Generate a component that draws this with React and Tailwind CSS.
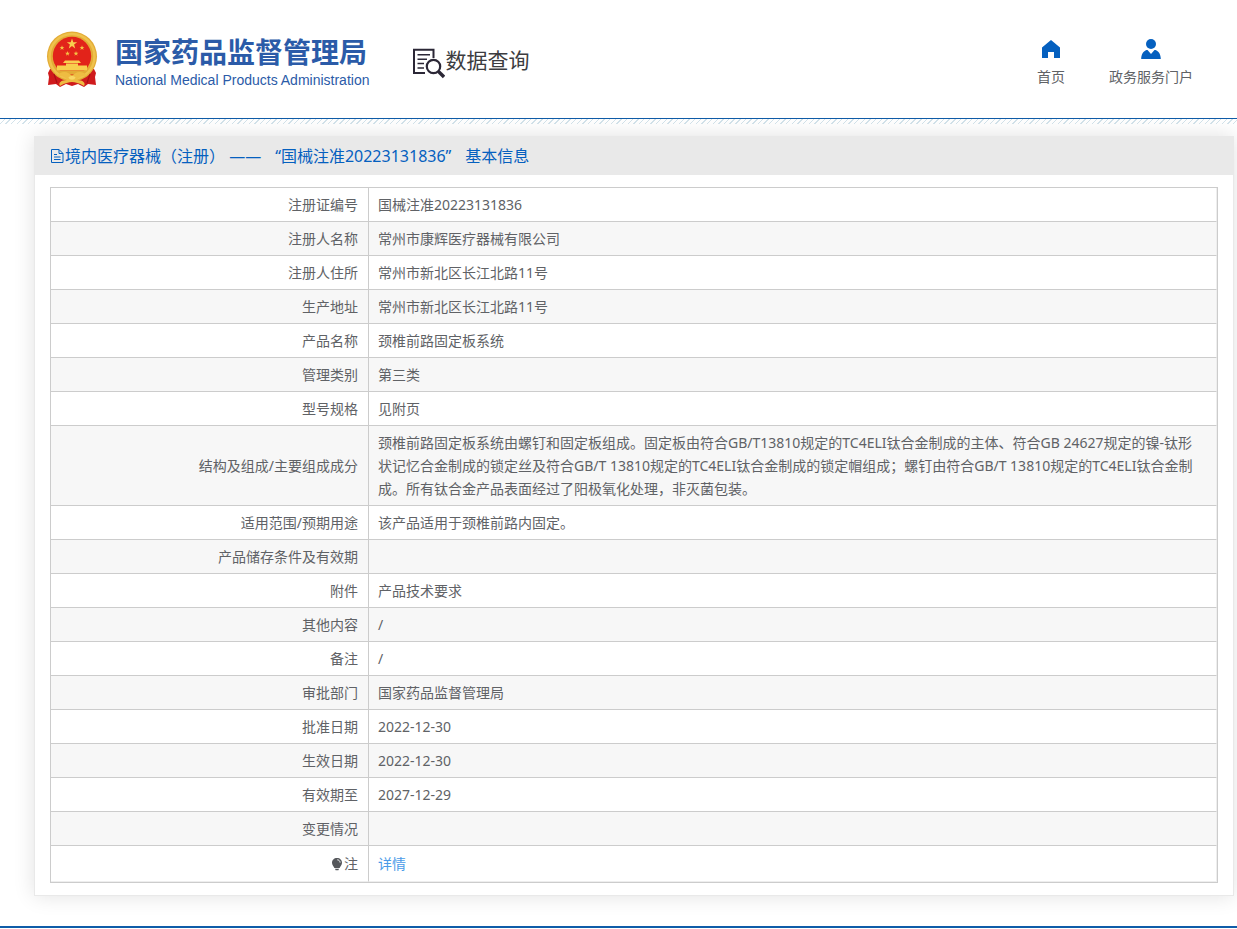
const rows = [
    { label: "注册证编号", value: "国械注准20223131836" },
    { label: "注册人名称", value: "常州市康辉医疗器械有限公司" },
    { label: "注册人住所", value: "常州市新北区长江北路11号" },
    { label: "生产地址", value: "常州市新北区长江北路11号" },
    { label: "产品名称", value: "颈椎前路固定板系统" },
    { label: "管理类别", value: "第三类" },
    { label: "型号规格", value: "见附页" },
    {
        label: "结构及组成/主要组成成分",
        value: "颈椎前路固定板系统由螺钉和固定板组成。固定板由符合GB/T13810规定的TC4ELI钛合金制成的主体、符合GB 24627规定的镍-钛形状记忆合金制成的锁定丝及符合GB/T 13810规定的TC4ELI钛合金制成的锁定帽组成；螺钉由符合GB/T 13810规定的TC4ELI钛合金制成。所有钛合金产品表面经过了阳极氧化处理，非灭菌包装。",
    },
    { label: "适用范围/预期用途", value: "该产品适用于颈椎前路内固定。" },
    { label: "产品储存条件及有效期", value: "" },
    { label: "附件", value: "产品技术要求" },
    { label: "其他内容", value: "/" },
    { label: "备注", value: "/" },
    { label: "审批部门", value: "国家药品监督管理局" },
    { label: "批准日期", value: "2022-12-30" },
    { label: "生效日期", value: "2022-12-30" },
    { label: "有效期至", value: "2027-12-29" },
    { label: "变更情况", value: "" },
];

function Emblem() {
    return (
        <svg viewBox="0 0 52 57" className="h-[57px] w-[52px]" aria-hidden="true">
            <path d="M4 38 L2 42 L3 46 L2 54 L10 53 L14 56 L20 53 L26 55 L32 53 L38 56 L42 53 L50 54 L49 46 L50 42 L48 38 Z" fill="#cf1a1c" />
            <circle cx="26" cy="25.5" r="25" fill="#e3ab35" />
            <circle cx="26" cy="25.5" r="22.5" fill="none" stroke="#efc24c" strokeWidth="2.5" />
            <circle cx="26" cy="25" r="19.2" fill="#e2231a" />
            <path d="M26 7.5 L27.3 11.2 L31.2 11.3 L28.1 13.6 L29.2 17.4 L26 15.1 L22.8 17.4 L23.9 13.6 L20.8 11.3 L24.7 11.2 Z" fill="#f8cf4e" />
            <g fill="#f5c344">
                <path id="star" d="M16 14.2 L16.6 16 L18.4 16 L17 17.1 L17.5 18.9 L16 17.8 L14.5 18.9 L15 17.1 L13.6 16 L15.4 16 Z" />
                <use href="#star" x="20" />
                <use href="#star" x="5.5" y="5.8" />
                <use href="#star" x="14" y="5.8" />
            </g>
            <path d="M17 32 L19 29.5 H33 L35 32 Z M20 32.4 H32 V34.5 H20 Z M11 34.6 H41 V39.4 H11 Z" fill="#f8cf4e" />
            <path d="M10 39.4 H42 L37 43.5 H15 Z" fill="#e3ab35" />
            <path d="M11 45 C17 38 23 42 26 45 C29 42 35 38 41 45 C36 44 32 46 31 49 C37 49 40 52 38 55 C33 52 29 51 26 51 C23 51 19 52 14 55 C12 52 15 49 21 49 C20 46 16 44 11 45 Z" fill="#eebc42" />
            <path d="M22.5 46.5 C24 44.5 28 44.5 29.5 46.5 C28.5 49.5 23.5 49.5 22.5 46.5 Z" fill="#f8d766" />
            <path d="M8 43 L11 52 M44 43 L41 52" stroke="#a81014" strokeWidth="1.2" />
        </svg>
    );
}

function SearchDocIcon() {
    return (
        <svg viewBox="0 0 32 32" className="h-8 w-8" fill="none" stroke="#2b2736" aria-hidden="true">
            <path d="M12 26 H1 V2.8 H20.5 V11" strokeWidth="2" />
            <path d="M4.5 7.8 H17 M4.5 12.2 H14 M4.5 16.6 H11 M4.5 21 H11" strokeWidth="1.5" />
            <circle cx="20.5" cy="19.5" r="6.7" strokeWidth="2.2" />
            <path d="M25.5 24.5 L31 30" strokeWidth="3.4" />
        </svg>
    );
}

function HomeIcon() {
    return (
        <svg viewBox="0 0 20 20" className="h-5 w-5" fill="#0560bf" aria-hidden="true">
            <path d="M10 1 L19 8.4 V19 H13 V13 H7 V19 H1 V8.4 Z" />
        </svg>
    );
}

function UserIcon() {
    return (
        <svg viewBox="0 0 20 20" className="h-5 w-5" fill="#0560bf" aria-hidden="true">
            <circle cx="10" cy="5" r="5" />
            <path d="M5.5 11 H6.5 L10 15 L13.5 11 H14.5 C17.5 12 19.8 15 19.8 20 H0.2 C0.2 15 2.5 12 5.5 11 Z" />
        </svg>
    );
}

function FileIcon() {
    return (
        <svg viewBox="0 0 15 16" className="h-4 w-[15px] shrink-0" fill="none" stroke="#0560bf" aria-hidden="true">
            <path d="M1.5 1.5 H9 L13 5.5 V14.5 H1.5 Z M9 1.5 V5.5 H13 M4 6.5 H7 M4 9 H10.5 M4 11.5 H10.5" />
        </svg>
    );
}

function BulbIcon() {
    return (
        <svg viewBox="0 0 12 14" className="h-[14px] w-3" aria-hidden="true">
            <path d="M6 1 C9 1 11 3.1 11 5.8 C11 8.2 9.4 9.3 8.6 11 H3.4 C2.6 9.3 1 8.2 1 5.8 C1 3.1 3 1 6 1 Z M4 11.8 H8 L7.4 13.2 H4.6 Z" fill="#55575b" />
            <path d="M6.3 2.8 C7.9 2.9 9 4 9.1 5.6" fill="none" stroke="#fff" />
        </svg>
    );
}

function Header() {
    return (
        <header className="flex h-[119px] items-center justify-between border-b border-[#0f5ca8] pr-11 pl-[46px]">
            <div className="flex items-center">
                <a href="#" className="flex items-center gap-[17px]">
                    <Emblem />
                    <div className="pt-1.5 text-[#2b5ba8]">
                        <h1 className="text-[28px] leading-9 font-bold">国家药品监督管理局</h1>
                        <p className="font-['Liberation_Sans'] text-[14px] leading-5">
                            National Medical Products Administration
                        </p>
                    </div>
                </a>
                <div className="ml-11 flex items-center pt-2">
                    <SearchDocIcon />
                    <span className="pb-1.5 text-[21px] leading-8 text-[#3c3c40]">数据查询</span>
                </div>
            </div>

            <nav className="flex gap-11 pt-2 text-sm text-[#606266]">
                <a href="#" className="flex flex-col items-center gap-2">
                    <HomeIcon />
                    首页
                </a>
                <a href="#" className="flex flex-col items-center gap-2">
                    <UserIcon />
                    政务服务门户
                </a>
            </nav>
        </header>
    );
}

export default function App() {
    return (
        <div className="bg-white font-['Noto_Sans','Noto_Sans_CJK_SC',sans-serif] text-[#606266]">
            <Header />
            <div className="h-[5px] bg-[repeating-linear-gradient(135deg,#fff_0px,#fff_3px,#d3e3eb_3px,#d3e3eb_4px)]" />

            <main className="mt-3 mr-[3px] mb-[30px] ml-[34px] border border-[#e9e9e9] bg-white shadow-[0_0_20px_rgba(0,0,0,0.12)]">
                <h2 className="flex h-[38px] items-center bg-[#e9e9e9] px-[15px] text-base text-[#0560bf]">
                    <FileIcon />
                    <span className="flex gap-[14px]">
                        <span>境内医疗器械（注册） ——</span>
                        <span>“国械注准20223131836”</span>
                        <span>基本信息</span>
                    </span>
                </h2>

                <div className="px-[15px] pt-3 pb-3">
                    <table className="w-full border-separate border-spacing-0 border border-[#ccc] text-sm leading-[23px]">
                        <tbody>
                            {rows.map((row) => (
                                <tr key={row.label} className="even:bg-[#f7f7f7]">
                                    <th
                                        scope="row"
                                        className="w-[318px] border-r border-b border-[#ccc] px-[10px] py-[5px] text-right font-normal"
                                    >
                                        {row.label}
                                    </th>
                                    <td className="border-r border-b border-r-[#eee] border-b-[#ccc] py-[5px] pr-4 pl-[9px]">
                                        {row.value}
                                    </td>
                                </tr>
                            ))}
                            <tr>
                                <th
                                    scope="row"
                                    className="border-r border-b border-r-[#ccc] border-b-[#eee] px-[10px] py-[6px] text-right font-normal"
                                >
                                    <span className="flex items-center justify-end gap-px">
                                        <BulbIcon />
                                        注
                                    </span>
                                </th>
                                <td className="border-r border-b border-[#eee] py-[6px] pr-4 pl-[9px]">
                                    <a href="#" className="text-[#4a9be8]">
                                        详情
                                    </a>
                                </td>
                            </tr>
                        </tbody>
                    </table>
                </div>
            </main>

            <footer className="border-t-2 border-[#0f5ca8]" />
        </div>
    );
}
